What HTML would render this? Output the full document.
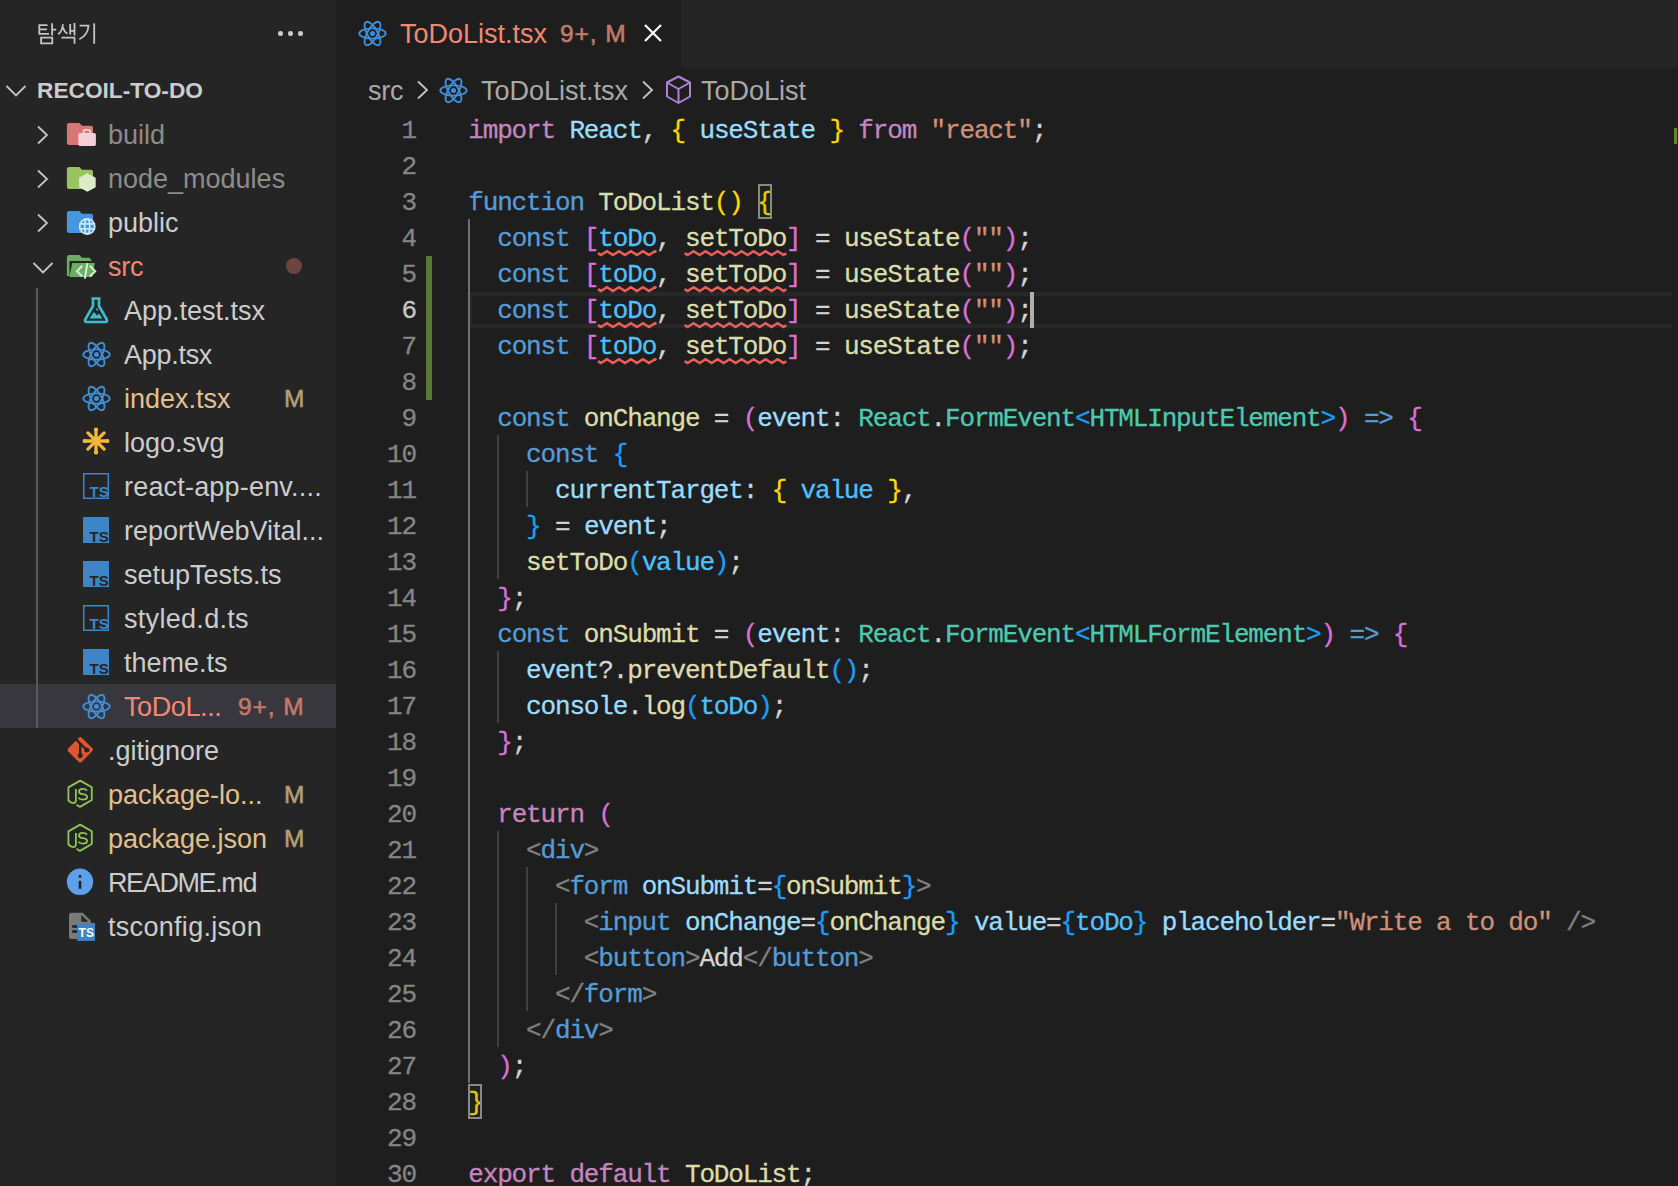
<!DOCTYPE html>
<html><head><meta charset="utf-8"><style>
html,body{margin:0;padding:0;}
body{width:1678px;height:1186px;overflow:hidden;background:#1E1E1E;position:relative;font-family:"Liberation Sans",sans-serif;}
.ic{position:absolute;display:block;}
.t{position:absolute;height:44px;line-height:44px;white-space:nowrap;}
.dot{position:absolute;width:4.5px;height:4.5px;border-radius:50%;background:#CCCCCC;}
#sb{position:absolute;left:0;top:0;width:336px;height:1186px;background:#252526;overflow:hidden;}
#tabs{position:absolute;left:336px;top:0;width:1342px;height:68px;background:#252526;}
#tab{position:absolute;left:336px;top:0;width:345px;height:68px;background:#1E1E1E;}
.ln{position:absolute;left:340px;width:76px;text-align:right;height:36px;line-height:36px;font-family:"Liberation Mono",monospace;font-size:26px;letter-spacing:-1.160px;padding-top:2px;-webkit-text-stroke:0.3px currentColor;}
.cl{position:absolute;left:468.3px;-webkit-text-stroke:0.3px currentColor;height:36px;line-height:36px;white-space:pre;font-family:"Liberation Mono",monospace;font-size:26px;letter-spacing:-1.160px;color:#D4D4D4;padding-top:2px;}
</style></head><body>
<div id="sb"><svg class="ic" style="left:0;top:0" width="110" height="50" viewBox="0 0 110 50"><g fill="none" stroke="#C4C4C4" stroke-width="1.8" stroke-linecap="butt">
<path d="M47.6 25.1 H39.3 V33.9 H49 M39.3 29.4 H47"/>
<path d="M52.1 23.3 V35.5 M52.1 29.6 H56.2"/>
<path d="M41.1 37.7 H52.3 V43.4 H41.1 Z"/>
<path d="M62.9 24.3 Q62.5 31 58.2 34.3 M62.9 27.5 Q64 31.5 67.4 33.7"/>
<path d="M70.2 23.9 V34.5 M70.2 30.8 H74.5 M74.5 23.1 V35.5"/>
<path d="M61.5 37.7 H74.5 V43.8"/>
<path d="M79.6 25.7 H88.5 Q88 35 79.4 39.2"/>
<path d="M94.2 23.3 V43.8"/>
</g></svg><div class="dot" style="left:278px;top:31px"></div><div class="dot" style="left:288px;top:31px"></div><div class="dot" style="left:298px;top:31px"></div><svg class="ic" style="left:5px;top:84px" width="22" height="14" viewBox="0 0 22 14"><path d="M1.5 2 L11 11.5 L20.5 2" fill="none" stroke="#C5C5C5" stroke-width="1.8"/></svg><div class="t" style="left:37px;top:68px;color:#CCCCCC;font-size:22.7px;font-weight:bold;">RECOIL-TO-DO</div><div style="position:absolute;left:0;top:684px;width:336px;height:44px;background:#37373D"></div><div style="position:absolute;left:36px;top:288px;width:2px;height:440px;background:#585858"></div><svg class="ic" style="left:36px;top:125px" width="14" height="20" viewBox="0 0 14 20"><path d="M2 1.5 L11 10 L2 18.5" fill="none" stroke="#C5C5C5" stroke-width="1.8"/></svg><svg class="ic" style="left:60px;top:116px" width="40" height="34" viewBox="60 116 40 34"><path d="M69 123 H79.3 L82 125.8 H91 Q93 125.8 93 127.8 V143 Q93 145 91 145 H69 Q66.9 145 66.9 143 V125 Q66.9 123 69 123 Z" fill="#D77673"/><rect x="78.3" y="133.1" width="17.6" height="12.8" rx="1.6" fill="#F6CFD4"/><path d="M83.6 133.1 V131.1 Q83.6 129.9 85 129.9 H88.8 Q90.2 129.9 90.2 131.1 V133.1" fill="none" stroke="#F6CFD4" stroke-width="1.9"/></svg><div class="t" style="left:108px;top:113px;color:#8C8C8C;font-size:27px;font-weight:normal;letter-spacing:0px">build</div><svg class="ic" style="left:36px;top:169px" width="14" height="20" viewBox="0 0 14 20"><path d="M2 1.5 L11 10 L2 18.5" fill="none" stroke="#C5C5C5" stroke-width="1.8"/></svg><svg class="ic" style="left:60px;top:160px" width="40" height="34" viewBox="60 160 40 34"><path d="M69 167 H79.3 L82 169.8 H91 Q93 169.8 93 171.8 V187 Q93 189 91 189 H69 Q66.9 189 66.9 187 V169 Q66.9 167 69 167 Z" fill="#98C35F"/><path d="M87.4 173.2 L95.7 177.8 L95.7 187.2 L87.4 191.8 L79.1 187.2 L79.1 177.8 Z" fill="#DEEBC8"/></svg><div class="t" style="left:108px;top:157px;color:#8C8C8C;font-size:27px;font-weight:normal;letter-spacing:0px">node_modules</div><svg class="ic" style="left:36px;top:213px" width="14" height="20" viewBox="0 0 14 20"><path d="M2 1.5 L11 10 L2 18.5" fill="none" stroke="#C5C5C5" stroke-width="1.8"/></svg><svg class="ic" style="left:60px;top:204px" width="40" height="34" viewBox="60 204 40 34"><path d="M69 211 H79.3 L82 213.8 H91 Q93 213.8 93 215.8 V231 Q93 233 91 233 H69 Q66.9 233 66.9 231 V213 Q66.9 211 69 211 Z" fill="#4596E0"/><circle cx="87.2" cy="226.5" r="8.4" fill="#C8E6FA"/><circle cx="87.2" cy="226.5" r="6.6" fill="#4596E0"/><g fill="none" stroke="#C8E6FA" stroke-width="1.7"><ellipse cx="87.2" cy="226.5" rx="2.6" ry="7.5"/><path d="M79.2 223.9 H95.2 M79.2 228.9 H95.2"/></g></svg><div class="t" style="left:108px;top:201px;color:#CCCCCC;font-size:27px;font-weight:normal;letter-spacing:0px">public</div><svg class="ic" style="left:32px;top:261px" width="22" height="14" viewBox="0 0 22 14"><path d="M1.5 2 L11 11.5 L20.5 2" fill="none" stroke="#C5C5C5" stroke-width="1.8"/></svg><svg class="ic" style="left:60px;top:248px" width="40" height="34" viewBox="60 248 40 34"><path d="M69 255 H79.3 L82 257.8 H89.3 L92 261 H69.4 V276 H66.9 V257 Q66.9 255 69 255 Z" fill="#69AE62"/><path d="M72.3 263 H94.9 L92 277 H69.3 Z" fill="#69AE62"/><path d="M82.3 265.7 L77 271.2 L82.3 276.6 M89.9 265.7 L95.2 271.2 L89.9 276.6 M87.4 263.2 L84.8 278.6" fill="none" stroke="#D5EDD0" stroke-width="2.1"/></svg><div class="t" style="left:108px;top:245px;color:#F48771;font-size:27px;font-weight:normal;letter-spacing:-0.3px">src</div><div style="position:absolute;left:286px;top:258px;width:16px;height:16px;border-radius:50%;background:#6E443F"></div><svg class="ic" style="left:83px;top:297px" width="26" height="27" viewBox="0 0 26 27"><path d="M8.5 1.5 H17.5 M10 1.5 V9 L2.2 22.5 Q1.2 25 4 25 H22 Q24.8 25 23.8 22.5 L16 9 V1.5" fill="none" stroke="#3FBDD0" stroke-width="2.6" stroke-linejoin="round"/><path d="M6.5 21.5 L11 15 L14 18.5 L16 16.5 L19.5 21.5 Z" fill="#3FBDD0"/><circle cx="14" cy="12.5" r="1.1" fill="#3FBDD0"/></svg><div class="t" style="left:124px;top:289px;color:#CCCCCC;font-size:27px;font-weight:normal;letter-spacing:0px">App.test.tsx</div><svg class="ic" style="left:81.5px;top:340.5px" width="29" height="27" viewBox="-0.5 -0.5 29 27"><g fill="none" stroke="#3E8ED8" stroke-width="1.9"><ellipse cx="14" cy="13" rx="13.2" ry="5.1"/><ellipse cx="14" cy="13" rx="13.2" ry="5.1" transform="rotate(60 14 13)"/><ellipse cx="14" cy="13" rx="13.2" ry="5.1" transform="rotate(120 14 13)"/></g><circle cx="14" cy="13" r="2.5" fill="#3E8ED8"/></svg><div class="t" style="left:124px;top:333px;color:#CCCCCC;font-size:27px;font-weight:normal;letter-spacing:-0.28px">App.tsx</div><svg class="ic" style="left:81.5px;top:384.5px" width="29" height="27" viewBox="-0.5 -0.5 29 27"><g fill="none" stroke="#3E8ED8" stroke-width="1.9"><ellipse cx="14" cy="13" rx="13.2" ry="5.1"/><ellipse cx="14" cy="13" rx="13.2" ry="5.1" transform="rotate(60 14 13)"/><ellipse cx="14" cy="13" rx="13.2" ry="5.1" transform="rotate(120 14 13)"/></g><circle cx="14" cy="13" r="2.5" fill="#3E8ED8"/></svg><div class="t" style="left:124px;top:377px;color:#E2C08D;font-size:27px;font-weight:normal;letter-spacing:0px">index.tsx</div><div class="t" style="left:284px;top:377px;color:#B39D78;font-size:24.5px;font-weight:normal;-webkit-text-stroke:0.6px #B39D78">M</div><svg class="ic" style="left:82px;top:427px" width="28" height="28" viewBox="0 0 28 28"><g stroke="#F5B73B" stroke-width="3.3" stroke-linecap="round"><path d="M14 2.5 V25.5 M2.5 14 H25.5 M5.9 5.9 L22.1 22.1 M22.1 5.9 L5.9 22.1"/></g><circle cx="14" cy="14" r="3.6" fill="#F5B73B"/><g fill="#F5B73B"><circle cx="14" cy="2.6" r="2.1"/><circle cx="14" cy="25.4" r="2.1"/><circle cx="2.6" cy="14" r="2.1"/><circle cx="25.4" cy="14" r="2.1"/></g></svg><div class="t" style="left:124px;top:421px;color:#CCCCCC;font-size:27px;font-weight:normal;letter-spacing:0px">logo.svg</div><svg class="ic" style="left:83px;top:473px" width="26" height="26" viewBox="0 0 26 26"><rect x="0.75" y="0.75" width="24.5" height="24.5" fill="none" stroke="#3D85C6" stroke-width="1.5"/><text x="6.5" y="24" font-family="Liberation Sans" font-weight="bold" font-size="15" fill="#3D85C6">TS</text></svg><div class="t" style="left:124px;top:465px;color:#CCCCCC;font-size:27px;font-weight:normal;letter-spacing:0.19px">react-app-env....</div><svg class="ic" style="left:83px;top:517px" width="26" height="26" viewBox="0 0 26 26"><rect x="0" y="0" width="26" height="26" fill="#3D85C6"/><text x="6.5" y="24.5" font-family="Liberation Sans" font-weight="bold" font-size="15" fill="#252526">TS</text></svg><div class="t" style="left:124px;top:509px;color:#CCCCCC;font-size:27px;font-weight:normal;letter-spacing:0px">reportWebVital...</div><svg class="ic" style="left:83px;top:561px" width="26" height="26" viewBox="0 0 26 26"><rect x="0" y="0" width="26" height="26" fill="#3D85C6"/><text x="6.5" y="24.5" font-family="Liberation Sans" font-weight="bold" font-size="15" fill="#252526">TS</text></svg><div class="t" style="left:124px;top:553px;color:#CCCCCC;font-size:27px;font-weight:normal;letter-spacing:0px">setupTests.ts</div><svg class="ic" style="left:83px;top:605px" width="26" height="26" viewBox="0 0 26 26"><rect x="0.75" y="0.75" width="24.5" height="24.5" fill="none" stroke="#3D85C6" stroke-width="1.5"/><text x="6.5" y="24" font-family="Liberation Sans" font-weight="bold" font-size="15" fill="#3D85C6">TS</text></svg><div class="t" style="left:124px;top:597px;color:#CCCCCC;font-size:27px;font-weight:normal;letter-spacing:0.3px">styled.d.ts</div><svg class="ic" style="left:83px;top:649px" width="26" height="26" viewBox="0 0 26 26"><rect x="0" y="0" width="26" height="26" fill="#3D85C6"/><text x="6.5" y="24.5" font-family="Liberation Sans" font-weight="bold" font-size="15" fill="#252526">TS</text></svg><div class="t" style="left:124px;top:641px;color:#CCCCCC;font-size:27px;font-weight:normal;letter-spacing:0px">theme.ts</div><svg class="ic" style="left:81.5px;top:692.5px" width="29" height="27" viewBox="-0.5 -0.5 29 27"><g fill="none" stroke="#3E8ED8" stroke-width="1.9"><ellipse cx="14" cy="13" rx="13.2" ry="5.1"/><ellipse cx="14" cy="13" rx="13.2" ry="5.1" transform="rotate(60 14 13)"/><ellipse cx="14" cy="13" rx="13.2" ry="5.1" transform="rotate(120 14 13)"/></g><circle cx="14" cy="13" r="2.5" fill="#3E8ED8"/></svg><div class="t" style="left:124px;top:685px;color:#F48771;font-size:27px;font-weight:normal;letter-spacing:-0.4px">ToDoL...</div><div class="t" style="left:238px;top:685px;color:#C47868;font-size:24.5px;font-weight:normal;letter-spacing:0.9px;-webkit-text-stroke:0.6px #C47868">9+, M</div><svg class="ic" style="left:60px;top:732px" width="40" height="34" viewBox="60 732 40 34"><g transform="translate(0 0)"><path d="M78.9 737.7 Q80.3 736.3 81.7 737.7 L92.4 748.3 Q93.8 749.7 92.4 751.1 L81.7 761.9 Q80.3 763.3 78.9 761.9 L68.2 751.4 Q66.8 750 68.2 748.6 Z" fill="#E0552F"/><path d="M75.6 738.6 L80.2 743.6 V755.4 M80.2 743.6 L86.8 750" fill="none" stroke="#252526" stroke-width="2.3"/><circle cx="80.2" cy="755.4" r="2.5" fill="#252526"/><circle cx="86.8" cy="750" r="2.5" fill="#252526"/></g></svg><div class="t" style="left:108px;top:729px;color:#CCCCCC;font-size:27px;font-weight:normal;letter-spacing:0px">.gitignore</div><svg class="ic" style="left:60px;top:776px" width="40" height="34" viewBox="60 776 40 34"><g fill="none" stroke="#8FC653" stroke-width="1.8" stroke-linejoin="round" transform="translate(0 0)"><path d="M76.5 804.8 L80 806.9 L91.8 800 V787.2 L80.2 780.6 L68.4 787.4 V800.4 Q70.5 803.2 73.2 803.2 Q75.9 803.2 75.9 800 V789"/><path d="M87 790.6 Q85.6 788.8 82.6 788.8 Q79 788.8 79 791.5 Q79 793.8 82.9 794.2 Q87.1 794.6 87.1 797 Q87.1 799.6 82.8 799.6 Q79.6 799.6 78.4 797.6"/></g></svg><div class="t" style="left:108px;top:773px;color:#E2C08D;font-size:27px;font-weight:normal;letter-spacing:0px">package-lo...</div><div class="t" style="left:284px;top:773px;color:#B39D78;font-size:24.5px;font-weight:normal;-webkit-text-stroke:0.6px #B39D78">M</div><svg class="ic" style="left:60px;top:820px" width="40" height="34" viewBox="60 820 40 34"><g fill="none" stroke="#8FC653" stroke-width="1.8" stroke-linejoin="round" transform="translate(0 44)"><path d="M76.5 804.8 L80 806.9 L91.8 800 V787.2 L80.2 780.6 L68.4 787.4 V800.4 Q70.5 803.2 73.2 803.2 Q75.9 803.2 75.9 800 V789"/><path d="M87 790.6 Q85.6 788.8 82.6 788.8 Q79 788.8 79 791.5 Q79 793.8 82.9 794.2 Q87.1 794.6 87.1 797 Q87.1 799.6 82.8 799.6 Q79.6 799.6 78.4 797.6"/></g></svg><div class="t" style="left:108px;top:817px;color:#E2C08D;font-size:27px;font-weight:normal;letter-spacing:0px">package.json</div><div class="t" style="left:284px;top:817px;color:#B39D78;font-size:24.5px;font-weight:normal;-webkit-text-stroke:0.6px #B39D78">M</div><svg class="ic" style="left:60px;top:864px" width="40" height="34" viewBox="60 864 40 34"><g transform="translate(0 0)"><circle cx="80" cy="881.8" r="13.2" fill="#5DA1EB"/><rect x="78.75" y="875.1" width="2.5" height="2.6" fill="#1E1E1E"/><rect x="78.75" y="880.9" width="2.5" height="7.9" fill="#1E1E1E"/></g></svg><div class="t" style="left:108px;top:861px;color:#CCCCCC;font-size:27px;font-weight:normal;letter-spacing:-1.38px">README.md</div><svg class="ic" style="left:60px;top:908px" width="40" height="34" viewBox="60 908 40 34"><g transform="translate(0 0)"><path d="M71.5 912.7 H82.8 L90.8 920.7 V936 Q90.8 939 88 939 H71.5 Q69 939 69 936.5 V915.2 Q69 912.7 71.5 912.7 Z" fill="#7A7A7A"/><path d="M81.3 915 V921.8 H88.3 Z" fill="#252526"/><path d="M72.2 926.5 H78 M72.2 931.5 H78" stroke="#1E1E1E" stroke-width="2.6"/><rect x="77.2" y="923" width="17.8" height="17.9" fill="#3D85C6"/><text x="78.6" y="937" font-family="Liberation Sans" font-weight="bold" font-size="12" fill="#FFFFFF">TS</text></g></svg><div class="t" style="left:108px;top:905px;color:#CCCCCC;font-size:27px;font-weight:normal;letter-spacing:0.3px">tsconfig.json</div></div>
<div id="tabs"></div>
<div id="tab"></div>
<svg class="ic" style="left:357.5px;top:19.5px" width="29" height="27" viewBox="-0.5 -0.5 29 27"><g fill="none" stroke="#3E8ED8" stroke-width="1.9"><ellipse cx="14" cy="13" rx="13.2" ry="5.1"/><ellipse cx="14" cy="13" rx="13.2" ry="5.1" transform="rotate(60 14 13)"/><ellipse cx="14" cy="13" rx="13.2" ry="5.1" transform="rotate(120 14 13)"/></g><circle cx="14" cy="13" r="2.5" fill="#3E8ED8"/></svg><div class="t" style="left:400px;top:12px;color:#F48771;font-size:27px">ToDoList.tsx</div><div class="t" style="left:560px;top:12px;color:#C47868;font-size:24.5px;letter-spacing:0.9px;-webkit-text-stroke:0.6px #C47868">9+, M</div><svg class="ic" style="left:643px;top:23px" width="20" height="20" viewBox="0 0 20 20"><path d="M2 2 L18 18 M18 2 L2 18" stroke="#FFFFFF" stroke-width="2.2"/></svg><div class="t" style="left:368px;top:69px;color:#A9A9A9;font-size:27px;letter-spacing:-0.3px">src</div><svg class="ic" style="left:416px;top:80px" width="14" height="20" viewBox="0 0 14 20"><path d="M2 1.5 L11 10 L2 18.5" fill="none" stroke="#C5C5C5" stroke-width="1.8"/></svg><svg class="ic" style="left:438.5px;top:76.5px" width="29" height="27" viewBox="-0.5 -0.5 29 27"><g fill="none" stroke="#3E8ED8" stroke-width="1.9"><ellipse cx="14" cy="13" rx="13.2" ry="5.1"/><ellipse cx="14" cy="13" rx="13.2" ry="5.1" transform="rotate(60 14 13)"/><ellipse cx="14" cy="13" rx="13.2" ry="5.1" transform="rotate(120 14 13)"/></g><circle cx="14" cy="13" r="2.5" fill="#3E8ED8"/></svg><div class="t" style="left:481px;top:69px;color:#A9A9A9;font-size:27px">ToDoList.tsx</div><svg class="ic" style="left:641px;top:80px" width="14" height="20" viewBox="0 0 14 20"><path d="M2 1.5 L11 10 L2 18.5" fill="none" stroke="#C5C5C5" stroke-width="1.8"/></svg><svg class="ic" style="left:665px;top:75px" width="27" height="30" viewBox="0 0 27 30"><g fill="none" stroke="#B180D7" stroke-width="2" stroke-linejoin="round"><path d="M13.5 1.5 L25 7.5 V21.5 L13.5 28 L2 21.5 V7.5 Z"/><path d="M2 7.5 L13.5 14 L25 7.5 M13.5 14 V28"/></g></svg><div class="t" style="left:701px;top:69px;color:#A9A9A9;font-size:27px">ToDoList</div>
<div style="position:absolute;left:470px;top:292px;width:1202px;height:36px;box-sizing:border-box;border:4px solid #282828;border-left-width:2px;border-right:none"></div>
<div style="position:absolute;left:468.0px;top:219px;width:2px;height:864px;background:#707070"></div><div style="position:absolute;left:496.88px;top:435px;width:2px;height:144px;background:#404040"></div><div style="position:absolute;left:525.76px;top:471px;width:2px;height:36px;background:#404040"></div><div style="position:absolute;left:496.88px;top:651px;width:2px;height:72px;background:#404040"></div><div style="position:absolute;left:496.88px;top:831px;width:2px;height:216px;background:#404040"></div><div style="position:absolute;left:525.76px;top:867px;width:2px;height:144px;background:#404040"></div><div style="position:absolute;left:554.64px;top:903px;width:2px;height:72px;background:#404040"></div>
<div class="ln" style="top:111px;color:#858585">1</div>
<div class="cl" style="top:111px"><span style="color:#C586C0">import</span> <span style="color:#9CDCFE">React</span><span style="color:#D4D4D4">,</span> <span style="color:#FFD700">{</span> <span style="color:#9CDCFE">useState</span> <span style="color:#FFD700">}</span> <span style="color:#C586C0">from</span> <span style="color:#CE9178">&quot;react&quot;</span><span style="color:#D4D4D4">;</span></div>
<div class="ln" style="top:147px;color:#858585">2</div>
<div class="ln" style="top:183px;color:#858585">3</div>
<div class="cl" style="top:183px"><span style="color:#569CD6">function</span> <span style="color:#DCDCAA">ToDoList</span><span style="color:#FFD700">()</span> <span style="color:#FFD700">{</span></div>
<div class="ln" style="top:219px;color:#858585">4</div>
<div class="cl" style="top:219px">  <span style="color:#569CD6">const</span> <span style="color:#DA70D6">[</span><span style="color:#4FC1FF">toDo</span><span style="color:#D4D4D4">,</span> <span style="color:#DCDCAA">setToDo</span><span style="color:#DA70D6">]</span> <span style="color:#D4D4D4">=</span> <span style="color:#DCDCAA">useState</span><span style="color:#DA70D6">(</span><span style="color:#CE9178">&quot;&quot;</span><span style="color:#DA70D6">)</span><span style="color:#D4D4D4">;</span></div>
<div class="ln" style="top:255px;color:#858585">5</div>
<div class="cl" style="top:255px">  <span style="color:#569CD6">const</span> <span style="color:#DA70D6">[</span><span style="color:#4FC1FF">toDo</span><span style="color:#D4D4D4">,</span> <span style="color:#DCDCAA">setToDo</span><span style="color:#DA70D6">]</span> <span style="color:#D4D4D4">=</span> <span style="color:#DCDCAA">useState</span><span style="color:#DA70D6">(</span><span style="color:#CE9178">&quot;&quot;</span><span style="color:#DA70D6">)</span><span style="color:#D4D4D4">;</span></div>
<div class="ln" style="top:291px;color:#C6C6C6">6</div>
<div class="cl" style="top:291px">  <span style="color:#569CD6">const</span> <span style="color:#DA70D6">[</span><span style="color:#4FC1FF">toDo</span><span style="color:#D4D4D4">,</span> <span style="color:#DCDCAA">setToDo</span><span style="color:#DA70D6">]</span> <span style="color:#D4D4D4">=</span> <span style="color:#DCDCAA">useState</span><span style="color:#DA70D6">(</span><span style="color:#CE9178">&quot;&quot;</span><span style="color:#DA70D6">)</span><span style="color:#D4D4D4">;</span></div>
<div class="ln" style="top:327px;color:#858585">7</div>
<div class="cl" style="top:327px">  <span style="color:#569CD6">const</span> <span style="color:#DA70D6">[</span><span style="color:#4FC1FF">toDo</span><span style="color:#D4D4D4">,</span> <span style="color:#DCDCAA">setToDo</span><span style="color:#DA70D6">]</span> <span style="color:#D4D4D4">=</span> <span style="color:#DCDCAA">useState</span><span style="color:#DA70D6">(</span><span style="color:#CE9178">&quot;&quot;</span><span style="color:#DA70D6">)</span><span style="color:#D4D4D4">;</span></div>
<div class="ln" style="top:363px;color:#858585">8</div>
<div class="ln" style="top:399px;color:#858585">9</div>
<div class="cl" style="top:399px">  <span style="color:#569CD6">const</span> <span style="color:#DCDCAA">onChange</span> <span style="color:#D4D4D4">=</span> <span style="color:#DA70D6">(</span><span style="color:#9CDCFE">event</span><span style="color:#D4D4D4">:</span> <span style="color:#4EC9B0">React</span><span style="color:#D4D4D4">.</span><span style="color:#4EC9B0">FormEvent</span><span style="color:#179FFF">&lt;</span><span style="color:#4EC9B0">HTMLInputElement</span><span style="color:#179FFF">&gt;</span><span style="color:#DA70D6">)</span> <span style="color:#569CD6">=&gt;</span> <span style="color:#DA70D6">{</span></div>
<div class="ln" style="top:435px;color:#858585">10</div>
<div class="cl" style="top:435px">    <span style="color:#569CD6">const</span> <span style="color:#179FFF">{</span></div>
<div class="ln" style="top:471px;color:#858585">11</div>
<div class="cl" style="top:471px">      <span style="color:#9CDCFE">currentTarget</span><span style="color:#D4D4D4">:</span> <span style="color:#FFD700">{</span> <span style="color:#4FC1FF">value</span> <span style="color:#FFD700">}</span><span style="color:#D4D4D4">,</span></div>
<div class="ln" style="top:507px;color:#858585">12</div>
<div class="cl" style="top:507px">    <span style="color:#179FFF">}</span> <span style="color:#D4D4D4">=</span> <span style="color:#9CDCFE">event</span><span style="color:#D4D4D4">;</span></div>
<div class="ln" style="top:543px;color:#858585">13</div>
<div class="cl" style="top:543px">    <span style="color:#DCDCAA">setToDo</span><span style="color:#179FFF">(</span><span style="color:#4FC1FF">value</span><span style="color:#179FFF">)</span><span style="color:#D4D4D4">;</span></div>
<div class="ln" style="top:579px;color:#858585">14</div>
<div class="cl" style="top:579px">  <span style="color:#DA70D6">}</span><span style="color:#D4D4D4">;</span></div>
<div class="ln" style="top:615px;color:#858585">15</div>
<div class="cl" style="top:615px">  <span style="color:#569CD6">const</span> <span style="color:#DCDCAA">onSubmit</span> <span style="color:#D4D4D4">=</span> <span style="color:#DA70D6">(</span><span style="color:#9CDCFE">event</span><span style="color:#D4D4D4">:</span> <span style="color:#4EC9B0">React</span><span style="color:#D4D4D4">.</span><span style="color:#4EC9B0">FormEvent</span><span style="color:#179FFF">&lt;</span><span style="color:#4EC9B0">HTMLFormElement</span><span style="color:#179FFF">&gt;</span><span style="color:#DA70D6">)</span> <span style="color:#569CD6">=&gt;</span> <span style="color:#DA70D6">{</span></div>
<div class="ln" style="top:651px;color:#858585">16</div>
<div class="cl" style="top:651px">    <span style="color:#9CDCFE">event</span><span style="color:#D4D4D4">?.</span><span style="color:#DCDCAA">preventDefault</span><span style="color:#179FFF">()</span><span style="color:#D4D4D4">;</span></div>
<div class="ln" style="top:687px;color:#858585">17</div>
<div class="cl" style="top:687px">    <span style="color:#9CDCFE">console</span><span style="color:#D4D4D4">.</span><span style="color:#DCDCAA">log</span><span style="color:#179FFF">(</span><span style="color:#4FC1FF">toDo</span><span style="color:#179FFF">)</span><span style="color:#D4D4D4">;</span></div>
<div class="ln" style="top:723px;color:#858585">18</div>
<div class="cl" style="top:723px">  <span style="color:#DA70D6">}</span><span style="color:#D4D4D4">;</span></div>
<div class="ln" style="top:759px;color:#858585">19</div>
<div class="ln" style="top:795px;color:#858585">20</div>
<div class="cl" style="top:795px">  <span style="color:#C586C0">return</span> <span style="color:#DA70D6">(</span></div>
<div class="ln" style="top:831px;color:#858585">21</div>
<div class="cl" style="top:831px">    <span style="color:#808080">&lt;</span><span style="color:#569CD6">div</span><span style="color:#808080">&gt;</span></div>
<div class="ln" style="top:867px;color:#858585">22</div>
<div class="cl" style="top:867px">      <span style="color:#808080">&lt;</span><span style="color:#569CD6">form</span> <span style="color:#9CDCFE">onSubmit</span><span style="color:#D4D4D4">=</span><span style="color:#179FFF">{</span><span style="color:#DCDCAA">onSubmit</span><span style="color:#179FFF">}</span><span style="color:#808080">&gt;</span></div>
<div class="ln" style="top:903px;color:#858585">23</div>
<div class="cl" style="top:903px">        <span style="color:#808080">&lt;</span><span style="color:#569CD6">input</span> <span style="color:#9CDCFE">onChange</span><span style="color:#D4D4D4">=</span><span style="color:#179FFF">{</span><span style="color:#DCDCAA">onChange</span><span style="color:#179FFF">}</span> <span style="color:#9CDCFE">value</span><span style="color:#D4D4D4">=</span><span style="color:#179FFF">{</span><span style="color:#4FC1FF">toDo</span><span style="color:#179FFF">}</span> <span style="color:#9CDCFE">placeholder</span><span style="color:#D4D4D4">=</span><span style="color:#CE9178">&quot;Write a to do&quot;</span> <span style="color:#808080">/&gt;</span></div>
<div class="ln" style="top:939px;color:#858585">24</div>
<div class="cl" style="top:939px">        <span style="color:#808080">&lt;</span><span style="color:#569CD6">button</span><span style="color:#808080">&gt;</span><span style="color:#D4D4D4">Add</span><span style="color:#808080">&lt;/</span><span style="color:#569CD6">button</span><span style="color:#808080">&gt;</span></div>
<div class="ln" style="top:975px;color:#858585">25</div>
<div class="cl" style="top:975px">      <span style="color:#808080">&lt;/</span><span style="color:#569CD6">form</span><span style="color:#808080">&gt;</span></div>
<div class="ln" style="top:1011px;color:#858585">26</div>
<div class="cl" style="top:1011px">    <span style="color:#808080">&lt;/</span><span style="color:#569CD6">div</span><span style="color:#808080">&gt;</span></div>
<div class="ln" style="top:1047px;color:#858585">27</div>
<div class="cl" style="top:1047px">  <span style="color:#DA70D6">)</span><span style="color:#D4D4D4">;</span></div>
<div class="ln" style="top:1083px;color:#858585">28</div>
<div class="cl" style="top:1083px"><span style="color:#FFD700">}</span></div>
<div class="ln" style="top:1119px;color:#858585">29</div>
<div class="ln" style="top:1155px;color:#858585">30</div>
<div class="cl" style="top:1155px"><span style="color:#C586C0">export</span> <span style="color:#C586C0">default</span> <span style="color:#DCDCAA">ToDoList</span><span style="color:#D4D4D4">;</span></div>
<svg class="ic" style="left:0;top:0" width="1678" height="1186"><path d="M597.96 253.10 L600.96 255.00 L606.96 251.20 L612.96 255.00 L618.96 251.20 L624.96 255.00 L630.96 251.20 L636.96 255.00 L642.96 251.20 L648.96 255.00 L654.96 251.20 L656.42 252.12" fill="none" stroke="#EC5F58" stroke-width="2.6" stroke-linejoin="miter"/><path d="M684.60 253.10 L687.60 255.00 L693.60 251.20 L699.60 255.00 L705.60 251.20 L711.60 255.00 L717.60 251.20 L723.60 255.00 L729.60 251.20 L735.60 255.00 L741.60 251.20 L747.60 255.00 L753.60 251.20 L759.60 255.00 L765.60 251.20 L771.60 255.00 L777.60 251.20 L783.60 255.00 L786.38 253.24" fill="none" stroke="#EC5F58" stroke-width="2.6" stroke-linejoin="miter"/><path d="M597.96 289.10 L600.96 291.00 L606.96 287.20 L612.96 291.00 L618.96 287.20 L624.96 291.00 L630.96 287.20 L636.96 291.00 L642.96 287.20 L648.96 291.00 L654.96 287.20 L656.42 288.12" fill="none" stroke="#EC5F58" stroke-width="2.6" stroke-linejoin="miter"/><path d="M684.60 289.10 L687.60 291.00 L693.60 287.20 L699.60 291.00 L705.60 287.20 L711.60 291.00 L717.60 287.20 L723.60 291.00 L729.60 287.20 L735.60 291.00 L741.60 287.20 L747.60 291.00 L753.60 287.20 L759.60 291.00 L765.60 287.20 L771.60 291.00 L777.60 287.20 L783.60 291.00 L786.38 289.24" fill="none" stroke="#EC5F58" stroke-width="2.6" stroke-linejoin="miter"/><path d="M597.96 325.10 L600.96 327.00 L606.96 323.20 L612.96 327.00 L618.96 323.20 L624.96 327.00 L630.96 323.20 L636.96 327.00 L642.96 323.20 L648.96 327.00 L654.96 323.20 L656.42 324.12" fill="none" stroke="#EC5F58" stroke-width="2.6" stroke-linejoin="miter"/><path d="M684.60 325.10 L687.60 327.00 L693.60 323.20 L699.60 327.00 L705.60 323.20 L711.60 327.00 L717.60 323.20 L723.60 327.00 L729.60 323.20 L735.60 327.00 L741.60 323.20 L747.60 327.00 L753.60 323.20 L759.60 327.00 L765.60 323.20 L771.60 327.00 L777.60 323.20 L783.60 327.00 L786.38 325.24" fill="none" stroke="#EC5F58" stroke-width="2.6" stroke-linejoin="miter"/><path d="M597.96 361.10 L600.96 363.00 L606.96 359.20 L612.96 363.00 L618.96 359.20 L624.96 363.00 L630.96 359.20 L636.96 363.00 L642.96 359.20 L648.96 363.00 L654.96 359.20 L656.42 360.12" fill="none" stroke="#EC5F58" stroke-width="2.6" stroke-linejoin="miter"/><path d="M684.60 361.10 L687.60 363.00 L693.60 359.20 L699.60 363.00 L705.60 359.20 L711.60 363.00 L717.60 359.20 L723.60 363.00 L729.60 359.20 L735.60 363.00 L741.60 359.20 L747.60 363.00 L753.60 359.20 L759.60 363.00 L765.60 359.20 L771.60 363.00 L777.60 359.20 L783.60 363.00 L786.38 361.24" fill="none" stroke="#EC5F58" stroke-width="2.6" stroke-linejoin="miter"/></svg>
<div style="position:absolute;left:426px;top:256px;width:6px;height:144px;background:#587C2F"></div><div style="position:absolute;left:758px;top:184px;width:14px;height:35px;box-sizing:border-box;border:2px solid #888888;background:rgba(0,100,0,0.1)"></div><div style="position:absolute;left:468px;top:1084px;width:14px;height:35px;box-sizing:border-box;border:2px solid #888888;background:rgba(0,100,0,0.1)"></div><div style="position:absolute;left:1030px;top:292px;width:4px;height:36px;background:#AEAFAD"></div><div style="position:absolute;left:1674px;top:128px;width:2.5px;height:16px;background:#5E8A2A"></div>
</body></html>
